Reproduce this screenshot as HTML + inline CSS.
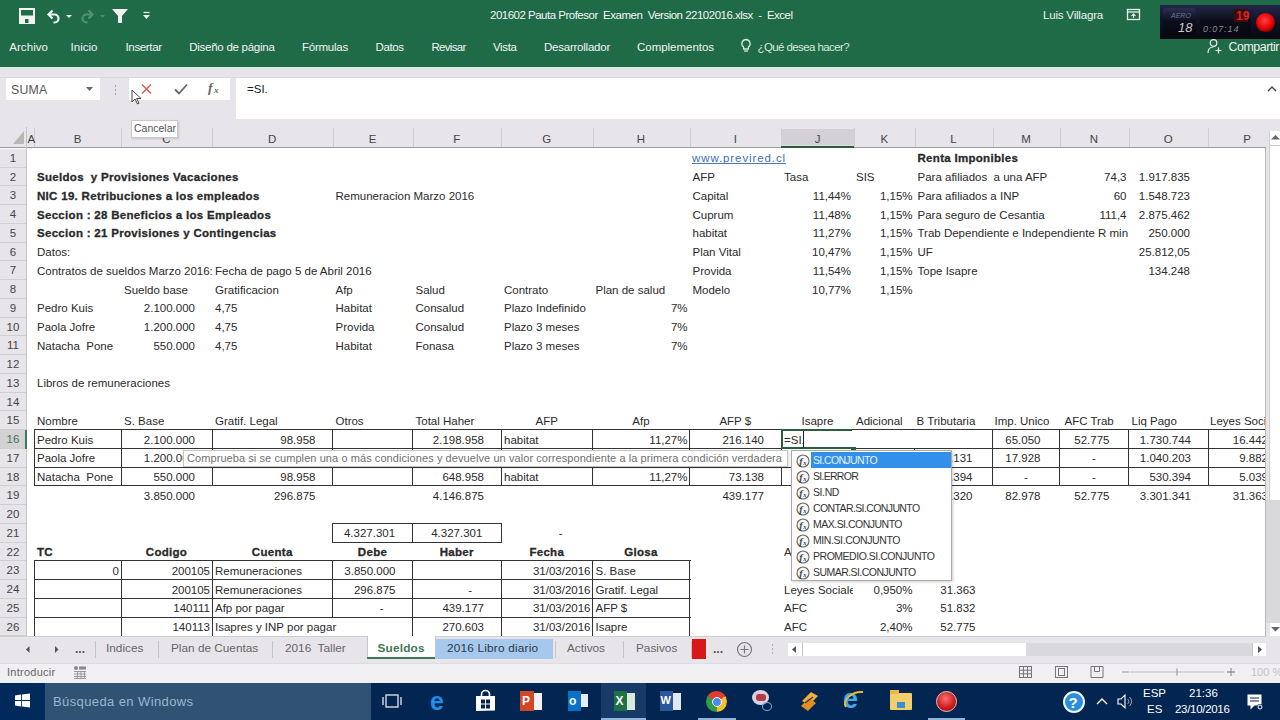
<!DOCTYPE html><html><head><meta charset="utf-8"><style>
*{margin:0;padding:0;box-sizing:border-box}
html,body{width:1280px;height:720px;overflow:hidden;background:#fff;font-family:"Liberation Sans",sans-serif}
.t,.c,.r,.a{position:absolute;white-space:pre}
.c{height:18.75px;line-height:18.75px}
.t{line-height:1}
svg{position:absolute;overflow:visible}
</style></head><body>
<div class="r" style="left:0px;top:0px;width:1280px;height:67px;background:#1f6b48;"></div>
<svg style="left:0;top:0" width="160" height="40" viewBox="0 0 160 40">
<path d="M20 9h14v14H20z" fill="none" stroke="#f2f2f2" stroke-width="2"/>
<path d="M20 16.5h14" stroke="#f2f2f2" stroke-width="2"/>
<path d="M21 17h12v5H21z" fill="#f2f2f2"/><path d="M25 19h3.5v4H25z" fill="#1f6b48"/>
<path d="M52.5 10.5l-4 4 4 4" fill="none" stroke="#f2f2f2" stroke-width="2.2"/>
<path d="M49 14.5h5.5a4 4 0 0 1 0 8h-1" fill="none" stroke="#f2f2f2" stroke-width="2.2"/>
<path d="M66 15h6l-3 3z" fill="#f2f2f2"/>
<path d="M88.5 10.5l4 4-4 4" fill="none" stroke="#4f9470" stroke-width="2.2"/>
<path d="M92 14.5h-5.5a4 4 0 0 0 0 8h1" fill="none" stroke="#4f9470" stroke-width="2.2"/>
<path d="M100 15h5l-2.5 2.5z" fill="#4f9470"/>
<path d="M112 9h16l-6 7v7h-4v-7z" fill="#f2f2f2"/>
<path d="M143.5 12.5h6" stroke="#f2f2f2" stroke-width="1.3"/>
<path d="M143 15h7l-3.5 4z" fill="#f2f2f2"/>
</svg>
<div class="t" style="left:490px;top:10px;font-size:11.5px;color:#f4f4f4;font-weight:normal;letter-spacing:-0.503px;">201602 Pauta Profesor  Examen  Version 22102016.xlsx  -  Excel</div>
<div class="t" style="left:1043px;top:10px;font-size:11.5px;color:#f0f0f0;font-weight:normal;letter-spacing:-0.187px;">Luis Villagra</div>
<svg style="left:1126px;top:8px" width="16" height="14" viewBox="0 0 16 14"><rect x="1.5" y="1.5" width="12" height="10" fill="none" stroke="#eee" stroke-width="1.3"/><path d="M1.5 4h12" stroke="#eee" stroke-width="1.3"/><path d="M7.5 10V6M5.5 8l2-2 2 2" stroke="#eee" stroke-width="1.1" fill="none"/></svg>
<div class="r" style="left:1160px;top:5px;width:120px;height:33.5px;background:linear-gradient(#23284a,#12142a 40%,#07080f);"></div>
<div class="r" style="left:1163px;top:8px;width:33px;height:27px;background:linear-gradient(#2a3050,#0c0e1c 50%,#06070c);border-radius:3px"></div>
<div class="r" style="left:1200px;top:8px;width:51px;height:27px;background:linear-gradient(#1e2440,#0a0b16 50%,#070810);border-radius:3px"></div>
<div class="r" style="left:1234px;top:9px;width:14px;height:13px;background:#3a0c10"></div>
<div class="t" style="left:1171px;top:12px;font-size:7px;color:#6a7090;font-style:italic">AERO</div>
<div class="t" style="left:1178px;top:21px;font-size:13px;color:#c8c8d0;font-style:italic">18</div>
<div class="t" style="left:1236px;top:9.5px;font-size:12px;color:#e02020;font-weight:bold">19</div>
<div class="t" style="left:1203px;top:25px;font-size:9px;color:#8a8a98;font-style:italic;letter-spacing:0.9px">0:07:14</div>
<div class="r" style="left:1256px;top:13px;width:19px;height:19px;background:radial-gradient(circle at 45% 40%,#ff4040,#e00000 55%,#400000 90%);border-radius:50%"></div>

<div class="t" style="left:9.25px;top:41.5px;font-size:11.5px;color:#f2f2f2;font-weight:normal;letter-spacing:0.058px;">Archivo</div>
<div class="t" style="left:70.5px;top:41.5px;font-size:11.5px;color:#f2f2f2;font-weight:normal;letter-spacing:0.026px;">Inicio</div>
<div class="t" style="left:125.5px;top:41.5px;font-size:11.5px;color:#f2f2f2;font-weight:normal;letter-spacing:-0.342px;">Insertar</div>
<div class="t" style="left:189.25px;top:41.5px;font-size:11.5px;color:#f2f2f2;font-weight:normal;letter-spacing:-0.266px;">Diseño de página</div>
<div class="t" style="left:302px;top:41.5px;font-size:11.5px;color:#f2f2f2;font-weight:normal;letter-spacing:-0.240px;">Fórmulas</div>
<div class="t" style="left:375.5px;top:41.5px;font-size:11.5px;color:#f2f2f2;font-weight:normal;letter-spacing:-0.408px;">Datos</div>
<div class="t" style="left:431.5px;top:41.5px;font-size:11.5px;color:#f2f2f2;font-weight:normal;letter-spacing:-0.711px;">Revisar</div>
<div class="t" style="left:493px;top:41.5px;font-size:11.5px;color:#f2f2f2;font-weight:normal;letter-spacing:-0.372px;">Vista</div>
<div class="t" style="left:544px;top:41.5px;font-size:11.5px;color:#f2f2f2;font-weight:normal;letter-spacing:-0.233px;">Desarrollador</div>
<div class="t" style="left:637px;top:41.5px;font-size:11.5px;color:#f2f2f2;font-weight:normal;letter-spacing:-0.028px;">Complementos</div>
<svg style="left:740px;top:38px" width="12" height="16" viewBox="0 0 12 16"><path d="M6 1.5a4.2 4.2 0 0 0-2.4 7.6V11h4.8V9.1A4.2 4.2 0 0 0 6 1.5z" fill="none" stroke="#d5e9de" stroke-width="1.3"/><path d="M4 13h4" stroke="#d5e9de" stroke-width="1.3"/></svg>
<div class="t" style="left:757.5px;top:41.5px;font-size:11.5px;color:#d5e9de;font-weight:normal;letter-spacing:-0.596px;">¿Qué desea hacer?</div>
<svg style="left:1207px;top:38px" width="16" height="16" viewBox="0 0 16 16"><circle cx="6.5" cy="5" r="3.3" fill="none" stroke="#eee" stroke-width="1.2"/><path d="M1 15c0-4 2.5-6 5.5-6" fill="none" stroke="#eee" stroke-width="1.2"/><path d="M11.5 9.5v6M8.5 12.5h6" stroke="#eee" stroke-width="1.2"/></svg>
<div class="t" style="left:1228.5px;top:40.5px;font-size:12.3px;color:#f2f2f2;font-weight:normal;letter-spacing:-0.388px;">Compartir</div>
<div class="r" style="left:0px;top:67px;width:1280px;height:81px;background:#e7e5e9;"></div>
<div class="r" style="left:0px;top:67px;width:1280px;height:3px;background:#d9ebe0;"></div>
<div class="r" style="left:0px;top:76.5px;width:1280px;height:1.5px;background:#dcd9de;"></div>
<div class="r" style="left:6px;top:78px;width:94px;height:22px;background:#ffffff;"></div>
<div class="t" style="left:11px;top:83.5px;font-size:12.3px;color:#555;font-weight:normal;letter-spacing:0.241px;">SUMA</div>
<svg style="left:86px;top:87px" width="8" height="5"><path d="M0 0h7l-3.5 4z" fill="#666"/></svg>
<div class="r" style="left:114.5px;top:85px;width:1.5px;height:1.5px;background:#aaa;"></div>
<div class="r" style="left:114.5px;top:89px;width:1.5px;height:1.5px;background:#aaa;"></div>
<div class="r" style="left:114.5px;top:93px;width:1.5px;height:1.5px;background:#aaa;"></div>
<div class="r" style="left:129px;top:78px;width:101px;height:22px;background:#ffffff;"></div>
<svg style="left:140px;top:83px" width="12" height="12" viewBox="0 0 12 12"><path d="M2 1.5l9 9M11 1.5l-9 9" stroke="#dd5a55" stroke-width="1.5"/></svg>
<svg style="left:174px;top:83px" width="14" height="12" viewBox="0 0 14 12"><path d="M1 6.5l4 4 8-9" fill="none" stroke="#666" stroke-width="1.8"/></svg>
<div class="t" style="left:208px;top:81px;font-size:13.5px;color:#666;font-family:'Liberation Serif',serif;font-style:italic;font-weight:bold">f</div><div class="t" style="left:214px;top:86px;font-size:9px;color:#666;font-family:'Liberation Serif',serif;font-style:italic;font-weight:bold">x</div>
<div class="r" style="left:236px;top:78px;width:1044px;height:41px;background:#ffffff;"></div>
<div class="t" style="left:247px;top:84px;font-size:11.5px;color:#222;font-weight:normal;">=SI.</div>
<svg style="left:1267px;top:86px" width="10" height="6"><path d="M1 5l4-4 4 4" fill="none" stroke="#444" stroke-width="1.4"/></svg>
<div class="r" style="left:0px;top:127px;width:1266px;height:21px;background:#e7e5e9;"></div>
<div class="r" style="left:0px;top:147px;width:1266px;height:1.2px;background:#9b9b9b;"></div>
<div class="r" style="left:26px;top:127px;width:1px;height:509.25px;background:#c6c6c6;"></div>
<svg style="left:12px;top:129px" width="14" height="16"><path d="M12 2v13H1z" fill="#b8b8b8"/></svg>
<div class="r" style="left:34px;top:128px;width:1px;height:19px;background:#cfcfcf;"></div>
<div class="t" style="left:27.5px;top:133.5px;font-size:11.5px;color:#444">A</div>
<div class="r" style="left:121px;top:128px;width:1px;height:19px;background:#cfcfcf;"></div>
<div class="t" style="left:47.5px;width:60px;text-align:center;top:133.5px;font-size:11.5px;color:#444">B</div>
<div class="r" style="left:212px;top:128px;width:1px;height:19px;background:#cfcfcf;"></div>
<div class="t" style="left:136.5px;width:60px;text-align:center;top:133.5px;font-size:11.5px;color:#444">C</div>
<div class="r" style="left:332.5px;top:128px;width:1px;height:19px;background:#cfcfcf;"></div>
<div class="t" style="left:242.25px;width:60px;text-align:center;top:133.5px;font-size:11.5px;color:#444">D</div>
<div class="r" style="left:412.5px;top:128px;width:1px;height:19px;background:#cfcfcf;"></div>
<div class="t" style="left:342.5px;width:60px;text-align:center;top:133.5px;font-size:11.5px;color:#444">E</div>
<div class="r" style="left:501px;top:128px;width:1px;height:19px;background:#cfcfcf;"></div>
<div class="t" style="left:426.75px;width:60px;text-align:center;top:133.5px;font-size:11.5px;color:#444">F</div>
<div class="r" style="left:592.5px;top:128px;width:1px;height:19px;background:#cfcfcf;"></div>
<div class="t" style="left:516.75px;width:60px;text-align:center;top:133.5px;font-size:11.5px;color:#444">G</div>
<div class="r" style="left:689.5px;top:128px;width:1px;height:19px;background:#cfcfcf;"></div>
<div class="t" style="left:611.0px;width:60px;text-align:center;top:133.5px;font-size:11.5px;color:#444">H</div>
<div class="r" style="left:781px;top:128px;width:1px;height:19px;background:#cfcfcf;"></div>
<div class="t" style="left:705.25px;width:60px;text-align:center;top:133.5px;font-size:11.5px;color:#444">I</div>
<div class="r" style="left:781px;top:128.5px;width:73px;height:19px;background:#d3d1d5;"></div>
<div class="r" style="left:781px;top:144.5px;width:73px;height:1.2px;background:#cfe3d6;"></div>
<div class="r" style="left:781px;top:145.7px;width:73px;height:2px;background:#2f5744;"></div>
<div class="r" style="left:854px;top:128px;width:1px;height:19px;background:#cfcfcf;"></div>
<div class="t" style="left:787.5px;width:60px;text-align:center;top:133.5px;font-size:11.5px;color:#444">J</div>
<div class="r" style="left:914.5px;top:128px;width:1px;height:19px;background:#cfcfcf;"></div>
<div class="t" style="left:854.25px;width:60px;text-align:center;top:133.5px;font-size:11.5px;color:#444">K</div>
<div class="r" style="left:992.5px;top:128px;width:1px;height:19px;background:#cfcfcf;"></div>
<div class="t" style="left:923.5px;width:60px;text-align:center;top:133.5px;font-size:11.5px;color:#444">L</div>
<div class="r" style="left:1059.5px;top:128px;width:1px;height:19px;background:#cfcfcf;"></div>
<div class="t" style="left:996.0px;width:60px;text-align:center;top:133.5px;font-size:11.5px;color:#444">M</div>
<div class="r" style="left:1128.5px;top:128px;width:1px;height:19px;background:#cfcfcf;"></div>
<div class="t" style="left:1064.0px;width:60px;text-align:center;top:133.5px;font-size:11.5px;color:#444">N</div>
<div class="r" style="left:1208px;top:128px;width:1px;height:19px;background:#cfcfcf;"></div>
<div class="t" style="left:1138.25px;width:60px;text-align:center;top:133.5px;font-size:11.5px;color:#444">O</div>
<div class="r" style="left:1266px;top:128px;width:1px;height:19px;background:#cfcfcf;"></div>
<div class="t" style="left:1217px;width:60px;text-align:center;top:133.5px;font-size:11.5px;color:#444">P</div>
<div class="r" style="left:0px;top:148.75px;width:26px;height:18.75px;background:#e7e5e9;"></div>
<div class="r" style="left:0px;top:166.5px;width:26px;height:1px;background:#d0d0d0;"></div>
<div class="t" style="left:0;width:26px;text-align:center;top:152.75px;font-size:11.5px;color:#444">1</div>
<div class="r" style="left:0px;top:167.5px;width:26px;height:18.75px;background:#e7e5e9;"></div>
<div class="r" style="left:0px;top:185.25px;width:26px;height:1px;background:#d0d0d0;"></div>
<div class="t" style="left:0;width:26px;text-align:center;top:171.50px;font-size:11.5px;color:#444">2</div>
<div class="r" style="left:0px;top:186.25px;width:26px;height:18.75px;background:#e7e5e9;"></div>
<div class="r" style="left:0px;top:204.0px;width:26px;height:1px;background:#d0d0d0;"></div>
<div class="t" style="left:0;width:26px;text-align:center;top:190.25px;font-size:11.5px;color:#444">3</div>
<div class="r" style="left:0px;top:205.0px;width:26px;height:18.75px;background:#e7e5e9;"></div>
<div class="r" style="left:0px;top:222.75px;width:26px;height:1px;background:#d0d0d0;"></div>
<div class="t" style="left:0;width:26px;text-align:center;top:209.00px;font-size:11.5px;color:#444">4</div>
<div class="r" style="left:0px;top:223.75px;width:26px;height:18.75px;background:#e7e5e9;"></div>
<div class="r" style="left:0px;top:241.5px;width:26px;height:1px;background:#d0d0d0;"></div>
<div class="t" style="left:0;width:26px;text-align:center;top:227.75px;font-size:11.5px;color:#444">5</div>
<div class="r" style="left:0px;top:242.5px;width:26px;height:18.75px;background:#e7e5e9;"></div>
<div class="r" style="left:0px;top:260.25px;width:26px;height:1px;background:#d0d0d0;"></div>
<div class="t" style="left:0;width:26px;text-align:center;top:246.50px;font-size:11.5px;color:#444">6</div>
<div class="r" style="left:0px;top:261.25px;width:26px;height:18.75px;background:#e7e5e9;"></div>
<div class="r" style="left:0px;top:279.0px;width:26px;height:1px;background:#d0d0d0;"></div>
<div class="t" style="left:0;width:26px;text-align:center;top:265.25px;font-size:11.5px;color:#444">7</div>
<div class="r" style="left:0px;top:280.0px;width:26px;height:18.75px;background:#e7e5e9;"></div>
<div class="r" style="left:0px;top:297.75px;width:26px;height:1px;background:#d0d0d0;"></div>
<div class="t" style="left:0;width:26px;text-align:center;top:284.00px;font-size:11.5px;color:#444">8</div>
<div class="r" style="left:0px;top:298.75px;width:26px;height:18.75px;background:#e7e5e9;"></div>
<div class="r" style="left:0px;top:316.5px;width:26px;height:1px;background:#d0d0d0;"></div>
<div class="t" style="left:0;width:26px;text-align:center;top:302.75px;font-size:11.5px;color:#444">9</div>
<div class="r" style="left:0px;top:317.5px;width:26px;height:18.75px;background:#e7e5e9;"></div>
<div class="r" style="left:0px;top:335.25px;width:26px;height:1px;background:#d0d0d0;"></div>
<div class="t" style="left:0;width:26px;text-align:center;top:321.50px;font-size:11.5px;color:#444">10</div>
<div class="r" style="left:0px;top:336.25px;width:26px;height:18.75px;background:#e7e5e9;"></div>
<div class="r" style="left:0px;top:354.0px;width:26px;height:1px;background:#d0d0d0;"></div>
<div class="t" style="left:0;width:26px;text-align:center;top:340.25px;font-size:11.5px;color:#444">11</div>
<div class="r" style="left:0px;top:355.0px;width:26px;height:18.75px;background:#e7e5e9;"></div>
<div class="r" style="left:0px;top:372.75px;width:26px;height:1px;background:#d0d0d0;"></div>
<div class="t" style="left:0;width:26px;text-align:center;top:359.00px;font-size:11.5px;color:#444">12</div>
<div class="r" style="left:0px;top:373.75px;width:26px;height:18.75px;background:#e7e5e9;"></div>
<div class="r" style="left:0px;top:391.5px;width:26px;height:1px;background:#d0d0d0;"></div>
<div class="t" style="left:0;width:26px;text-align:center;top:377.75px;font-size:11.5px;color:#444">13</div>
<div class="r" style="left:0px;top:392.5px;width:26px;height:18.75px;background:#e7e5e9;"></div>
<div class="r" style="left:0px;top:410.25px;width:26px;height:1px;background:#d0d0d0;"></div>
<div class="t" style="left:0;width:26px;text-align:center;top:396.50px;font-size:11.5px;color:#444">14</div>
<div class="r" style="left:0px;top:411.25px;width:26px;height:18.75px;background:#e7e5e9;"></div>
<div class="r" style="left:0px;top:429.0px;width:26px;height:1px;background:#d0d0d0;"></div>
<div class="t" style="left:0;width:26px;text-align:center;top:415.25px;font-size:11.5px;color:#444">15</div>
<div class="r" style="left:0px;top:430.0px;width:26px;height:18.75px;background:#d2d2d2;"></div>
<div class="r" style="left:0px;top:447.75px;width:26px;height:1px;background:#d0d0d0;"></div>
<div class="t" style="left:0;width:26px;text-align:center;top:434.00px;font-size:11.5px;color:#4a6e5a">16</div>
<div class="r" style="left:0px;top:448.75px;width:26px;height:18.75px;background:#e7e5e9;"></div>
<div class="r" style="left:0px;top:466.5px;width:26px;height:1px;background:#d0d0d0;"></div>
<div class="t" style="left:0;width:26px;text-align:center;top:452.75px;font-size:11.5px;color:#444">17</div>
<div class="r" style="left:0px;top:467.5px;width:26px;height:18.75px;background:#e7e5e9;"></div>
<div class="r" style="left:0px;top:485.25px;width:26px;height:1px;background:#d0d0d0;"></div>
<div class="t" style="left:0;width:26px;text-align:center;top:471.50px;font-size:11.5px;color:#444">18</div>
<div class="r" style="left:0px;top:486.25px;width:26px;height:18.75px;background:#e7e5e9;"></div>
<div class="r" style="left:0px;top:504.0px;width:26px;height:1px;background:#d0d0d0;"></div>
<div class="t" style="left:0;width:26px;text-align:center;top:490.25px;font-size:11.5px;color:#444">19</div>
<div class="r" style="left:0px;top:505.0px;width:26px;height:18.75px;background:#e7e5e9;"></div>
<div class="r" style="left:0px;top:522.75px;width:26px;height:1px;background:#d0d0d0;"></div>
<div class="t" style="left:0;width:26px;text-align:center;top:509.00px;font-size:11.5px;color:#444">20</div>
<div class="r" style="left:0px;top:523.75px;width:26px;height:18.75px;background:#e7e5e9;"></div>
<div class="r" style="left:0px;top:541.5px;width:26px;height:1px;background:#d0d0d0;"></div>
<div class="t" style="left:0;width:26px;text-align:center;top:527.75px;font-size:11.5px;color:#444">21</div>
<div class="r" style="left:0px;top:542.5px;width:26px;height:18.75px;background:#e7e5e9;"></div>
<div class="r" style="left:0px;top:560.25px;width:26px;height:1px;background:#d0d0d0;"></div>
<div class="t" style="left:0;width:26px;text-align:center;top:546.50px;font-size:11.5px;color:#444">22</div>
<div class="r" style="left:0px;top:561.25px;width:26px;height:18.75px;background:#e7e5e9;"></div>
<div class="r" style="left:0px;top:579.0px;width:26px;height:1px;background:#d0d0d0;"></div>
<div class="t" style="left:0;width:26px;text-align:center;top:565.25px;font-size:11.5px;color:#444">23</div>
<div class="r" style="left:0px;top:580.0px;width:26px;height:18.75px;background:#e7e5e9;"></div>
<div class="r" style="left:0px;top:597.75px;width:26px;height:1px;background:#d0d0d0;"></div>
<div class="t" style="left:0;width:26px;text-align:center;top:584.00px;font-size:11.5px;color:#444">24</div>
<div class="r" style="left:0px;top:598.75px;width:26px;height:18.75px;background:#e7e5e9;"></div>
<div class="r" style="left:0px;top:616.5px;width:26px;height:1px;background:#d0d0d0;"></div>
<div class="t" style="left:0;width:26px;text-align:center;top:602.75px;font-size:11.5px;color:#444">25</div>
<div class="r" style="left:0px;top:617.5px;width:26px;height:18.75px;background:#e7e5e9;"></div>
<div class="r" style="left:0px;top:635.25px;width:26px;height:1px;background:#d0d0d0;"></div>
<div class="t" style="left:0;width:26px;text-align:center;top:621.50px;font-size:11.5px;color:#444">26</div>
<div class="r" style="left:25px;top:430.0px;width:1.6px;height:18.75px;background:#3f7a5c;"></div>
<div class="c" style="left:692px;top:149.25px;font-size:11.5px;color:#3f6fb8;letter-spacing:0.899px">www.previred.cl</div>
<div class="r" style="left:692px;top:163.25px;width:94px;height:1px;background:#4a78bd"></div>
<div class="c" style="left:917.50px;top:149.25px;font-size:11.5px;font-weight:bold;color:#2a2a2a;letter-spacing:0.3px;-webkit-text-stroke:0.3px #2a2a2a;">Renta Imponibles</div>
<div class="c" style="left:37.00px;top:168.00px;font-size:11.5px;font-weight:bold;color:#2a2a2a;letter-spacing:0.3px;-webkit-text-stroke:0.3px #2a2a2a;">Sueldos  y Provisiones Vacaciones</div>
<div class="c" style="left:37.00px;top:186.75px;font-size:11.5px;font-weight:bold;color:#2a2a2a;letter-spacing:0.3px;-webkit-text-stroke:0.3px #2a2a2a;">NIC 19. Retribuciones a los empleados</div>
<div class="c" style="left:37.00px;top:205.50px;font-size:11.5px;font-weight:bold;color:#2a2a2a;letter-spacing:0.3px;-webkit-text-stroke:0.3px #2a2a2a;">Seccion : 28 Beneficios a los Empleados</div>
<div class="c" style="left:37.00px;top:224.25px;font-size:11.5px;font-weight:bold;color:#2a2a2a;letter-spacing:0.3px;-webkit-text-stroke:0.3px #2a2a2a;">Seccion : 21 Provisiones y Contingencias</div>
<div class="c" style="left:37.00px;top:243.00px;font-size:11.5px;font-weight:normal;color:#2a2a2a;">Datos:</div>
<div class="c" style="left:37.00px;top:261.75px;font-size:11.5px;font-weight:normal;color:#2a2a2a;">Contratos de sueldos Marzo 2016:</div>
<div class="c" style="left:215.00px;top:261.75px;font-size:11.5px;font-weight:normal;color:#2a2a2a;">Fecha de pago 5 de Abril 2016</div>
<div class="c" style="left:335.50px;top:186.75px;font-size:11.5px;font-weight:normal;color:#2a2a2a;">Remuneracion Marzo 2016</div>
<div class="c" style="left:692.50px;top:168.00px;font-size:11.5px;font-weight:normal;color:#2a2a2a;">AFP</div>
<div class="c" style="left:784.00px;top:168.00px;font-size:11.5px;font-weight:normal;color:#2a2a2a;">Tasa</div>
<div class="c" style="left:856.00px;top:168.00px;font-size:11.5px;font-weight:normal;color:#2a2a2a;">SIS</div>
<div class="c" style="left:692.50px;top:186.75px;font-size:11.5px;font-weight:normal;color:#2a2a2a;">Capital</div>
<div class="c" style="right:429.00px;top:186.75px;font-size:11.5px;font-weight:normal;color:#2a2a2a;;text-align:right">11,44%</div>
<div class="c" style="right:367.50px;top:186.75px;font-size:11.5px;font-weight:normal;color:#2a2a2a;;text-align:right">1,15%</div>
<div class="c" style="left:692.50px;top:205.50px;font-size:11.5px;font-weight:normal;color:#2a2a2a;">Cuprum</div>
<div class="c" style="right:429.00px;top:205.50px;font-size:11.5px;font-weight:normal;color:#2a2a2a;;text-align:right">11,48%</div>
<div class="c" style="right:367.50px;top:205.50px;font-size:11.5px;font-weight:normal;color:#2a2a2a;;text-align:right">1,15%</div>
<div class="c" style="left:692.50px;top:224.25px;font-size:11.5px;font-weight:normal;color:#2a2a2a;">habitat</div>
<div class="c" style="right:429.00px;top:224.25px;font-size:11.5px;font-weight:normal;color:#2a2a2a;;text-align:right">11,27%</div>
<div class="c" style="right:367.50px;top:224.25px;font-size:11.5px;font-weight:normal;color:#2a2a2a;;text-align:right">1,15%</div>
<div class="c" style="left:692.50px;top:243.00px;font-size:11.5px;font-weight:normal;color:#2a2a2a;">Plan Vital</div>
<div class="c" style="right:429.00px;top:243.00px;font-size:11.5px;font-weight:normal;color:#2a2a2a;;text-align:right">10,47%</div>
<div class="c" style="right:367.50px;top:243.00px;font-size:11.5px;font-weight:normal;color:#2a2a2a;;text-align:right">1,15%</div>
<div class="c" style="left:692.50px;top:261.75px;font-size:11.5px;font-weight:normal;color:#2a2a2a;">Provida</div>
<div class="c" style="right:429.00px;top:261.75px;font-size:11.5px;font-weight:normal;color:#2a2a2a;;text-align:right">11,54%</div>
<div class="c" style="right:367.50px;top:261.75px;font-size:11.5px;font-weight:normal;color:#2a2a2a;;text-align:right">1,15%</div>
<div class="c" style="left:692.50px;top:280.50px;font-size:11.5px;font-weight:normal;color:#2a2a2a;">Modelo</div>
<div class="c" style="right:429.00px;top:280.50px;font-size:11.5px;font-weight:normal;color:#2a2a2a;;text-align:right">10,77%</div>
<div class="c" style="right:367.50px;top:280.50px;font-size:11.5px;font-weight:normal;color:#2a2a2a;;text-align:right">1,15%</div>
<div class="c" style="left:917.50px;top:168.00px;font-size:11.5px;font-weight:normal;color:#2a2a2a;">Para afiliados  a una AFP</div>
<div class="c" style="right:153.50px;top:168.00px;font-size:11.5px;font-weight:normal;color:#2a2a2a;;text-align:right">74,3</div>
<div class="c" style="right:90.00px;top:168.00px;font-size:11.5px;font-weight:normal;color:#2a2a2a;;text-align:right">1.917.835</div>
<div class="c" style="left:917.50px;top:186.75px;font-size:11.5px;font-weight:normal;color:#2a2a2a;">Para afiliados a INP</div>
<div class="c" style="right:153.50px;top:186.75px;font-size:11.5px;font-weight:normal;color:#2a2a2a;;text-align:right">60</div>
<div class="c" style="right:90.00px;top:186.75px;font-size:11.5px;font-weight:normal;color:#2a2a2a;;text-align:right">1.548.723</div>
<div class="c" style="left:917.50px;top:205.50px;font-size:11.5px;font-weight:normal;color:#2a2a2a;">Para seguro de Cesantia</div>
<div class="c" style="right:153.50px;top:205.50px;font-size:11.5px;font-weight:normal;color:#2a2a2a;;text-align:right">111,4</div>
<div class="c" style="right:90.00px;top:205.50px;font-size:11.5px;font-weight:normal;color:#2a2a2a;;text-align:right">2.875.462</div>
<div class="c" style="left:917.50px;top:224.25px;font-size:11.5px;font-weight:normal;color:#2a2a2a;">Trab Dependiente e Independiente R min</div>
<div class="c" style="right:90.00px;top:224.25px;font-size:11.5px;font-weight:normal;color:#2a2a2a;;text-align:right">250.000</div>
<div class="c" style="left:917.50px;top:243.00px;font-size:11.5px;font-weight:normal;color:#2a2a2a;">UF</div>
<div class="c" style="right:90.00px;top:243.00px;font-size:11.5px;font-weight:normal;color:#2a2a2a;;text-align:right">25.812,05</div>
<div class="c" style="left:917.50px;top:261.75px;font-size:11.5px;font-weight:normal;color:#2a2a2a;">Tope Isapre</div>
<div class="c" style="right:90.00px;top:261.75px;font-size:11.5px;font-weight:normal;color:#2a2a2a;;text-align:right">134.248</div>
<div class="c" style="left:124.00px;top:280.50px;font-size:11.5px;font-weight:normal;color:#2a2a2a;">Sueldo base</div>
<div class="c" style="left:215.00px;top:280.50px;font-size:11.5px;font-weight:normal;color:#2a2a2a;">Gratificacion</div>
<div class="c" style="left:335.50px;top:280.50px;font-size:11.5px;font-weight:normal;color:#2a2a2a;">Afp</div>
<div class="c" style="left:415.50px;top:280.50px;font-size:11.5px;font-weight:normal;color:#2a2a2a;">Salud</div>
<div class="c" style="left:504.00px;top:280.50px;font-size:11.5px;font-weight:normal;color:#2a2a2a;">Contrato</div>
<div class="c" style="left:595.50px;top:280.50px;font-size:11.5px;font-weight:normal;color:#2a2a2a;">Plan de salud</div>
<div class="c" style="left:37.00px;top:299.25px;font-size:11.5px;font-weight:normal;color:#2a2a2a;">Pedro Kuis</div>
<div class="c" style="right:1085.00px;top:299.25px;font-size:11.5px;font-weight:normal;color:#2a2a2a;;text-align:right">2.100.000</div>
<div class="c" style="left:215.00px;top:299.25px;font-size:11.5px;font-weight:normal;color:#2a2a2a;">4,75</div>
<div class="c" style="left:335.50px;top:299.25px;font-size:11.5px;font-weight:normal;color:#2a2a2a;">Habitat</div>
<div class="c" style="left:415.50px;top:299.25px;font-size:11.5px;font-weight:normal;color:#2a2a2a;">Consalud</div>
<div class="c" style="left:504.00px;top:299.25px;font-size:11.5px;font-weight:normal;color:#2a2a2a;">Plazo Indefinido</div>
<div class="c" style="right:592.50px;top:299.25px;font-size:11.5px;font-weight:normal;color:#2a2a2a;;text-align:right">7%</div>
<div class="c" style="left:37.00px;top:318.00px;font-size:11.5px;font-weight:normal;color:#2a2a2a;">Paola Jofre</div>
<div class="c" style="right:1085.00px;top:318.00px;font-size:11.5px;font-weight:normal;color:#2a2a2a;;text-align:right">1.200.000</div>
<div class="c" style="left:215.00px;top:318.00px;font-size:11.5px;font-weight:normal;color:#2a2a2a;">4,75</div>
<div class="c" style="left:335.50px;top:318.00px;font-size:11.5px;font-weight:normal;color:#2a2a2a;">Provida</div>
<div class="c" style="left:415.50px;top:318.00px;font-size:11.5px;font-weight:normal;color:#2a2a2a;">Consalud</div>
<div class="c" style="left:504.00px;top:318.00px;font-size:11.5px;font-weight:normal;color:#2a2a2a;">Plazo 3 meses</div>
<div class="c" style="right:592.50px;top:318.00px;font-size:11.5px;font-weight:normal;color:#2a2a2a;;text-align:right">7%</div>
<div class="c" style="left:37.00px;top:336.75px;font-size:11.5px;font-weight:normal;color:#2a2a2a;">Natacha  Pone</div>
<div class="c" style="right:1085.00px;top:336.75px;font-size:11.5px;font-weight:normal;color:#2a2a2a;;text-align:right">550.000</div>
<div class="c" style="left:215.00px;top:336.75px;font-size:11.5px;font-weight:normal;color:#2a2a2a;">4,75</div>
<div class="c" style="left:335.50px;top:336.75px;font-size:11.5px;font-weight:normal;color:#2a2a2a;">Habitat</div>
<div class="c" style="left:415.50px;top:336.75px;font-size:11.5px;font-weight:normal;color:#2a2a2a;">Fonasa</div>
<div class="c" style="left:504.00px;top:336.75px;font-size:11.5px;font-weight:normal;color:#2a2a2a;">Plazo 3 meses</div>
<div class="c" style="right:592.50px;top:336.75px;font-size:11.5px;font-weight:normal;color:#2a2a2a;;text-align:right">7%</div>
<div class="c" style="left:37.00px;top:374.25px;font-size:11.5px;font-weight:normal;color:#2a2a2a;">Libros de remuneraciones</div>
<div class="c" style="left:37.00px;top:411.75px;font-size:11.5px;font-weight:normal;color:#2a2a2a;">Nombre</div>
<div class="c" style="left:124.00px;top:411.75px;font-size:11.5px;font-weight:normal;color:#2a2a2a;">S. Base</div>
<div class="c" style="left:215.00px;top:411.75px;font-size:11.5px;font-weight:normal;color:#2a2a2a;">Gratif. Legal</div>
<div class="c" style="left:335.50px;top:411.75px;font-size:11.5px;font-weight:normal;color:#2a2a2a;">Otros</div>
<div class="c" style="left:415.50px;top:411.75px;font-size:11.5px;font-weight:normal;color:#2a2a2a;">Total Haher</div>
<div class="c" style="left:446.75px;width:200px;top:411.75px;font-size:11.5px;font-weight:normal;color:#2a2a2a;;text-align:center">AFP</div>
<div class="c" style="left:541.00px;width:200px;top:411.75px;font-size:11.5px;font-weight:normal;color:#2a2a2a;;text-align:center">Afp</div>
<div class="c" style="left:635.25px;width:200px;top:411.75px;font-size:11.5px;font-weight:normal;color:#2a2a2a;;text-align:center">AFP $</div>
<div class="c" style="left:717.50px;width:200px;top:411.75px;font-size:11.5px;font-weight:normal;color:#2a2a2a;;text-align:center">Isapre</div>
<div class="c" style="left:856.00px;top:411.75px;font-size:11.5px;font-weight:normal;color:#2a2a2a;">Adicional</div>
<div class="c" style="left:916.50px;top:411.75px;font-size:11.5px;font-weight:normal;color:#2a2a2a;">B Tributaria</div>
<div class="c" style="left:994.50px;top:411.75px;font-size:11.5px;font-weight:normal;color:#2a2a2a;">Imp. Unico</div>
<div class="c" style="left:1064.50px;top:411.75px;font-size:11.5px;font-weight:normal;color:#2a2a2a;">AFC Trab</div>
<div class="c" style="left:1131.50px;top:411.75px;font-size:11.5px;font-weight:normal;color:#2a2a2a;">Liq Pago</div>
<div class="c" style="left:1210.00px;top:411.75px;font-size:11.5px;font-weight:normal;color:#2a2a2a;">Leyes Sociales</div>
<div class="r" style="left:33.5px;top:429px;width:1233px;height:1.4px;background:#333;"></div>
<div class="r" style="left:33.5px;top:448px;width:1233px;height:1.4px;background:#333;"></div>
<div class="r" style="left:33.5px;top:467px;width:1233px;height:1.4px;background:#333;"></div>
<div class="r" style="left:33.5px;top:485px;width:1233px;height:1.4px;background:#333;"></div>
<div class="r" style="left:34px;top:429px;width:1.4px;height:57px;background:#333;"></div>
<div class="r" style="left:121px;top:429px;width:1.4px;height:57px;background:#333;"></div>
<div class="r" style="left:212px;top:429px;width:1.4px;height:57px;background:#333;"></div>
<div class="r" style="left:332px;top:429px;width:1.4px;height:57px;background:#333;"></div>
<div class="r" style="left:412px;top:429px;width:1.4px;height:57px;background:#333;"></div>
<div class="r" style="left:501px;top:429px;width:1.4px;height:57px;background:#333;"></div>
<div class="r" style="left:592px;top:429px;width:1.4px;height:57px;background:#333;"></div>
<div class="r" style="left:689px;top:429px;width:1.4px;height:57px;background:#333;"></div>
<div class="r" style="left:781px;top:429px;width:1.4px;height:57px;background:#333;"></div>
<div class="r" style="left:854px;top:448px;width:1.4px;height:38px;background:#333;"></div>
<div class="r" style="left:914px;top:448px;width:1.4px;height:38px;background:#333;"></div>
<div class="r" style="left:992px;top:429px;width:1.4px;height:57px;background:#333;"></div>
<div class="r" style="left:1059px;top:429px;width:1.4px;height:57px;background:#333;"></div>
<div class="r" style="left:1128px;top:429px;width:1.4px;height:57px;background:#333;"></div>
<div class="r" style="left:1208px;top:429px;width:1.4px;height:57px;background:#333;"></div>
<div class="c" style="left:37.00px;top:430.50px;font-size:11.5px;font-weight:normal;color:#2a2a2a;">Pedro Kuis</div>
<div class="c" style="right:1085.00px;top:430.50px;font-size:11.5px;font-weight:normal;color:#2a2a2a;;text-align:right">2.100.000</div>
<div class="c" style="right:964.50px;top:430.50px;font-size:11.5px;font-weight:normal;color:#2a2a2a;;text-align:right">98.958</div>
<div class="c" style="right:796.00px;top:430.50px;font-size:11.5px;font-weight:normal;color:#2a2a2a;;text-align:right">2.198.958</div>
<div class="c" style="left:504.00px;top:430.50px;font-size:11.5px;font-weight:normal;color:#2a2a2a;">habitat</div>
<div class="c" style="right:592.50px;top:430.50px;font-size:11.5px;font-weight:normal;color:#2a2a2a;;text-align:right">11,27%</div>
<div class="c" style="right:516.00px;top:430.50px;font-size:11.5px;font-weight:normal;color:#2a2a2a;;text-align:right">216.140</div>
<div class="c" style="right:239.50px;top:430.50px;font-size:11.5px;font-weight:normal;color:#2a2a2a;;text-align:right">65.050</div>
<div class="c" style="right:170.50px;top:430.50px;font-size:11.5px;font-weight:normal;color:#2a2a2a;;text-align:right">52.775</div>
<div class="c" style="right:89.00px;top:430.50px;font-size:11.5px;font-weight:normal;color:#2a2a2a;;text-align:right">1.730.744</div>
<div class="c" style="right:12.00px;top:430.50px;font-size:11.5px;font-weight:normal;color:#2a2a2a;;text-align:right">16.442</div>
<div class="c" style="left:37.00px;top:449.25px;font-size:11.5px;font-weight:normal;color:#2a2a2a;">Paola Jofre</div>
<div class="c" style="right:1085.00px;top:449.25px;font-size:11.5px;font-weight:normal;color:#2a2a2a;;text-align:right">1.200.000</div>
<div class="c" style="right:307.50px;top:449.25px;font-size:11.5px;font-weight:normal;color:#2a2a2a;;text-align:right">.131</div>
<div class="c" style="right:239.50px;top:449.25px;font-size:11.5px;font-weight:normal;color:#2a2a2a;;text-align:right">17.928</div>
<div class="c" style="left:994.00px;width:200px;top:449.25px;font-size:11.5px;font-weight:normal;color:#2a2a2a;;text-align:center">-</div>
<div class="c" style="right:89.00px;top:449.25px;font-size:11.5px;font-weight:normal;color:#2a2a2a;;text-align:right">1.040.203</div>
<div class="c" style="right:12.00px;top:449.25px;font-size:11.5px;font-weight:normal;color:#2a2a2a;;text-align:right">9.882</div>
<div class="c" style="left:37.00px;top:468.00px;font-size:11.5px;font-weight:normal;color:#2a2a2a;">Natacha  Pone</div>
<div class="c" style="right:1085.00px;top:468.00px;font-size:11.5px;font-weight:normal;color:#2a2a2a;;text-align:right">550.000</div>
<div class="c" style="right:964.50px;top:468.00px;font-size:11.5px;font-weight:normal;color:#2a2a2a;;text-align:right">98.958</div>
<div class="c" style="right:796.00px;top:468.00px;font-size:11.5px;font-weight:normal;color:#2a2a2a;;text-align:right">648.958</div>
<div class="c" style="left:504.00px;top:468.00px;font-size:11.5px;font-weight:normal;color:#2a2a2a;">habitat</div>
<div class="c" style="right:592.50px;top:468.00px;font-size:11.5px;font-weight:normal;color:#2a2a2a;;text-align:right">11,27%</div>
<div class="c" style="right:516.00px;top:468.00px;font-size:11.5px;font-weight:normal;color:#2a2a2a;;text-align:right">73.138</div>
<div class="c" style="right:307.50px;top:468.00px;font-size:11.5px;font-weight:normal;color:#2a2a2a;;text-align:right">.394</div>
<div class="c" style="left:926.00px;width:200px;top:468.00px;font-size:11.5px;font-weight:normal;color:#2a2a2a;;text-align:center">-</div>
<div class="c" style="left:994.00px;width:200px;top:468.00px;font-size:11.5px;font-weight:normal;color:#2a2a2a;;text-align:center">-</div>
<div class="c" style="right:89.00px;top:468.00px;font-size:11.5px;font-weight:normal;color:#2a2a2a;;text-align:right">530.394</div>
<div class="c" style="right:12.00px;top:468.00px;font-size:11.5px;font-weight:normal;color:#2a2a2a;;text-align:right">5.039</div>
<div class="c" style="right:1085.00px;top:486.75px;font-size:11.5px;font-weight:normal;color:#2a2a2a;;text-align:right">3.850.000</div>
<div class="c" style="right:964.50px;top:486.75px;font-size:11.5px;font-weight:normal;color:#2a2a2a;;text-align:right">296.875</div>
<div class="c" style="right:796.00px;top:486.75px;font-size:11.5px;font-weight:normal;color:#2a2a2a;;text-align:right">4.146.875</div>
<div class="c" style="right:516.00px;top:486.75px;font-size:11.5px;font-weight:normal;color:#2a2a2a;;text-align:right">439.177</div>
<div class="c" style="right:307.50px;top:486.75px;font-size:11.5px;font-weight:normal;color:#2a2a2a;;text-align:right">.320</div>
<div class="c" style="right:239.50px;top:486.75px;font-size:11.5px;font-weight:normal;color:#2a2a2a;;text-align:right">82.978</div>
<div class="c" style="right:170.50px;top:486.75px;font-size:11.5px;font-weight:normal;color:#2a2a2a;;text-align:right">52.775</div>
<div class="c" style="right:89.00px;top:486.75px;font-size:11.5px;font-weight:normal;color:#2a2a2a;;text-align:right">3.301.341</div>
<div class="c" style="right:12.00px;top:486.75px;font-size:11.5px;font-weight:normal;color:#2a2a2a;;text-align:right">31.363</div>
<div class="r" style="left:331.5px;top:523px;width:81px;height:1.4px;background:#333;"></div>
<div class="r" style="left:331.5px;top:542px;width:81px;height:1.4px;background:#333;"></div>
<div class="r" style="left:411.5px;top:523px;width:90px;height:1.4px;background:#333;"></div>
<div class="r" style="left:411.5px;top:542px;width:90px;height:1.4px;background:#333;"></div>
<div class="r" style="left:332px;top:523px;width:1.4px;height:20px;background:#333;"></div>
<div class="r" style="left:412px;top:523px;width:1.4px;height:20px;background:#333;"></div>
<div class="r" style="left:501px;top:523px;width:1.4px;height:20px;background:#333;"></div>
<div class="c" style="left:269.50px;width:200px;top:524.25px;font-size:11.5px;font-weight:normal;color:#2a2a2a;;text-align:center">4.327.301</div>
<div class="c" style="left:356.75px;width:200px;top:524.25px;font-size:11.5px;font-weight:normal;color:#2a2a2a;;text-align:center">4.327.301</div>
<div class="c" style="left:460.75px;width:200px;top:524.25px;font-size:11.5px;font-weight:normal;color:#2a2a2a;;text-align:center">-</div>
<div class="c" style="left:37.00px;top:543.00px;font-size:11.5px;font-weight:bold;color:#2a2a2a;letter-spacing:0.3px;-webkit-text-stroke:0.3px #2a2a2a;">TC</div>
<div class="c" style="left:66.50px;width:200px;top:543.00px;font-size:11.5px;font-weight:bold;color:#2a2a2a;letter-spacing:0.3px;-webkit-text-stroke:0.3px #2a2a2a;;text-align:center">Codigo</div>
<div class="c" style="left:172.25px;width:200px;top:543.00px;font-size:11.5px;font-weight:bold;color:#2a2a2a;letter-spacing:0.3px;-webkit-text-stroke:0.3px #2a2a2a;;text-align:center">Cuenta</div>
<div class="c" style="left:272.50px;width:200px;top:543.00px;font-size:11.5px;font-weight:bold;color:#2a2a2a;letter-spacing:0.3px;-webkit-text-stroke:0.3px #2a2a2a;;text-align:center">Debe</div>
<div class="c" style="left:356.75px;width:200px;top:543.00px;font-size:11.5px;font-weight:bold;color:#2a2a2a;letter-spacing:0.3px;-webkit-text-stroke:0.3px #2a2a2a;;text-align:center">Haber</div>
<div class="c" style="left:446.75px;width:200px;top:543.00px;font-size:11.5px;font-weight:bold;color:#2a2a2a;letter-spacing:0.3px;-webkit-text-stroke:0.3px #2a2a2a;;text-align:center">Fecha</div>
<div class="c" style="left:541.00px;width:200px;top:543.00px;font-size:11.5px;font-weight:bold;color:#2a2a2a;letter-spacing:0.3px;-webkit-text-stroke:0.3px #2a2a2a;;text-align:center">Glosa</div>
<div class="c" style="left:784.00px;top:543.00px;font-size:11.5px;font-weight:normal;color:#2a2a2a;">A</div>
<div class="r" style="left:33.5px;top:560px;width:657px;height:1.4px;background:#333;"></div>
<div class="r" style="left:33.5px;top:579px;width:657px;height:1.4px;background:#333;"></div>
<div class="r" style="left:33.5px;top:598px;width:657px;height:1.4px;background:#333;"></div>
<div class="r" style="left:33.5px;top:617px;width:657px;height:1.4px;background:#333;"></div>
<div class="r" style="left:34px;top:560px;width:1.4px;height:76px;background:#333;"></div>
<div class="r" style="left:121px;top:560px;width:1.4px;height:76px;background:#333;"></div>
<div class="r" style="left:212px;top:560px;width:1.4px;height:76px;background:#333;"></div>
<div class="r" style="left:332px;top:560px;width:1.4px;height:58px;background:#333;"></div>
<div class="r" style="left:412px;top:560px;width:1.4px;height:76px;background:#333;"></div>
<div class="r" style="left:501px;top:560px;width:1.4px;height:76px;background:#333;"></div>
<div class="r" style="left:592px;top:560px;width:1.4px;height:76px;background:#333;"></div>
<div class="r" style="left:689px;top:560px;width:1.4px;height:76px;background:#333;"></div>
<div class="c" style="right:1161.00px;top:561.75px;font-size:11.5px;font-weight:normal;color:#2a2a2a;;text-align:right">0</div>
<div class="c" style="right:1070.00px;top:561.75px;font-size:11.5px;font-weight:normal;color:#2a2a2a;;text-align:right">200105</div>
<div class="c" style="left:215.00px;top:561.75px;font-size:11.5px;font-weight:normal;color:#2a2a2a;">Remuneraciones</div>
<div class="c" style="right:884.50px;top:561.75px;font-size:11.5px;font-weight:normal;color:#2a2a2a;;text-align:right">3.850.000</div>
<div class="c" style="right:689.50px;top:561.75px;font-size:11.5px;font-weight:normal;color:#2a2a2a;;text-align:right">31/03/2016</div>
<div class="c" style="left:595.50px;top:561.75px;font-size:11.5px;font-weight:normal;color:#2a2a2a;">S. Base</div>
<div class="c" style="right:1070.00px;top:580.50px;font-size:11.5px;font-weight:normal;color:#2a2a2a;;text-align:right">200105</div>
<div class="c" style="left:215.00px;top:580.50px;font-size:11.5px;font-weight:normal;color:#2a2a2a;">Remuneraciones</div>
<div class="c" style="right:884.50px;top:580.50px;font-size:11.5px;font-weight:normal;color:#2a2a2a;;text-align:right">296.875</div>
<div class="c" style="right:808.00px;top:580.50px;font-size:11.5px;font-weight:normal;color:#2a2a2a;;text-align:right">-</div>
<div class="c" style="right:689.50px;top:580.50px;font-size:11.5px;font-weight:normal;color:#2a2a2a;;text-align:right">31/03/2016</div>
<div class="c" style="left:595.50px;top:580.50px;font-size:11.5px;font-weight:normal;color:#2a2a2a;">Gratif. Legal</div>
<div class="c" style="right:1070.00px;top:599.25px;font-size:11.5px;font-weight:normal;color:#2a2a2a;;text-align:right">140111</div>
<div class="c" style="left:215.00px;top:599.25px;font-size:11.5px;font-weight:normal;color:#2a2a2a;">Afp por pagar</div>
<div class="c" style="right:896.50px;top:599.25px;font-size:11.5px;font-weight:normal;color:#2a2a2a;;text-align:right">-</div>
<div class="c" style="right:796.00px;top:599.25px;font-size:11.5px;font-weight:normal;color:#2a2a2a;;text-align:right">439.177</div>
<div class="c" style="right:689.50px;top:599.25px;font-size:11.5px;font-weight:normal;color:#2a2a2a;;text-align:right">31/03/2016</div>
<div class="c" style="left:595.50px;top:599.25px;font-size:11.5px;font-weight:normal;color:#2a2a2a;">AFP $</div>
<div class="c" style="right:1070.00px;top:618.00px;font-size:11.5px;font-weight:normal;color:#2a2a2a;;text-align:right">140113</div>
<div class="c" style="left:215.00px;top:618.00px;font-size:11.5px;font-weight:normal;color:#2a2a2a;">Isapres y INP por pagar</div>
<div class="c" style="right:796.00px;top:618.00px;font-size:11.5px;font-weight:normal;color:#2a2a2a;;text-align:right">270.603</div>
<div class="c" style="right:689.50px;top:618.00px;font-size:11.5px;font-weight:normal;color:#2a2a2a;;text-align:right">31/03/2016</div>
<div class="c" style="left:595.50px;top:618.00px;font-size:11.5px;font-weight:normal;color:#2a2a2a;">Isapre</div>
<div class="c" style="left:784px;top:580.50px;width:69px;overflow:hidden;font-size:11.5px;color:#2a2a2a">Leyes Sociales</div>
<div class="c" style="right:367.50px;top:580.50px;font-size:11.5px;font-weight:normal;color:#2a2a2a;;text-align:right">0,950%</div>
<div class="c" style="right:304.50px;top:580.50px;font-size:11.5px;font-weight:normal;color:#2a2a2a;;text-align:right">31.363</div>
<div class="c" style="left:784.00px;top:599.25px;font-size:11.5px;font-weight:normal;color:#2a2a2a;">AFC</div>
<div class="c" style="right:367.50px;top:599.25px;font-size:11.5px;font-weight:normal;color:#2a2a2a;;text-align:right">3%</div>
<div class="c" style="right:304.50px;top:599.25px;font-size:11.5px;font-weight:normal;color:#2a2a2a;;text-align:right">51.832</div>
<div class="c" style="left:784.00px;top:618.00px;font-size:11.5px;font-weight:normal;color:#2a2a2a;">AFC</div>
<div class="c" style="right:367.50px;top:618.00px;font-size:11.5px;font-weight:normal;color:#2a2a2a;;text-align:right">2,40%</div>
<div class="c" style="right:304.50px;top:618.00px;font-size:11.5px;font-weight:normal;color:#2a2a2a;;text-align:right">52.775</div>
<div class="r" style="left:780.5px;top:429.0px;width:71px;height:20.25px;border:2px solid #2b5e3f;border-right:none;background:#fff"></div>
<div class="r" style="left:782.5px;top:431.0px;width:21px;height:16.25px;background:#fff;"></div>
<div class="r" style="left:803px;top:430.5px;width:1.3px;height:17.75px;background:#222;"></div>
<div class="r" style="left:851px;top:447.25px;width:5px;height:4px;background:#2b5e3f;"></div>
<div class="c" style="left:784.00px;top:430.50px;font-size:11.5px;font-weight:normal;color:#2a2a2a;">=SI.</div>
<div class="r" style="left:1265.5px;top:127px;width:14.5px;height:509.25px;background:#e7e5e9;"></div>
<div class="r" style="left:1265px;top:148px;width:1.2px;height:488px;background:#b8b8b8;"></div>
<div class="r" style="left:1268.5px;top:131px;width:1px;height:369px;background:#cfcfcf;"></div>
<div class="r" style="left:1269.5px;top:131px;width:10.5px;height:14px;background:#fff;"></div>
<div class="r" style="left:1269.5px;top:145px;width:10.5px;height:1px;background:#c8c8c8;"></div>
<div class="r" style="left:1269.5px;top:146px;width:10.5px;height:354px;background:#fff;"></div>
<div class="r" style="left:1265.5px;top:500px;width:14.5px;height:123px;background:#d9d8dc;"></div>
<div class="r" style="left:1269.5px;top:623px;width:10.5px;height:12.5px;background:#fff;"></div>
<svg style="left:1271px;top:135px" width="9" height="5"><path d="M0 4.5l4.5-4.5 4.5 4.5z" fill="#666"/></svg>
<svg style="left:1271px;top:627px" width="9" height="5"><path d="M0 0l4.5 4.5 4.5-4.5z" fill="#666"/></svg>
<div class="r" style="left:131px;top:120px;width:47px;height:18px;background:#fff;border:1px solid #c8c8c8;box-shadow:1px 1px 2px rgba(0,0,0,.15)"></div>
<div class="t" style="left:134px;top:123px;font-size:10.5px;color:#555;font-weight:normal;">Cancelar</div>
<svg style="left:131px;top:89px" width="12" height="16" viewBox="0 0 12 16"><path d="M1 1v12l3-3 2.5 5 1.5-.8-2.4-4.7H10z" fill="#fff" stroke="#333" stroke-width="0.9"/></svg>
<div class="r" style="left:182.5px;top:449.75px;width:605px;height:17px;background:#fff;border:1px solid #c4c4c4;box-shadow:1px 1px 2px rgba(0,0,0,.12)"></div>
<div class="t" style="left:187px;top:453.25px;font-size:11px;color:#707070;font-weight:normal;letter-spacing:0.076px;">Comprueba si se cumplen una o más condiciones y devuelve un valor correspondiente a la primera condición verdadera</div>
<div class="r" style="left:791px;top:450px;width:161px;height:131px;background:#fff;border:1px solid #aaa;box-shadow:1px 1px 3px rgba(0,0,0,.2)"></div>
<div class="r" style="left:811px;top:451.5px;width:140px;height:16px;background:#3390ea;"></div>
<svg style="left:796px;top:453.5px" width="14" height="14" viewBox="0 0 14 14"><circle cx="7" cy="7" r="6" fill="#f6f6f6" stroke="#666" stroke-width="1.1"/><text x="3.2" y="10.5" font-size="10" font-style="italic" font-weight="bold" font-family="Liberation Serif" fill="#444">f</text><text x="7.3" y="10.5" font-size="6.5" font-style="italic" font-weight="bold" font-family="Liberation Serif" fill="#444">x</text></svg>
<div class="t" style="left:813px;top:455px;font-size:10.5px;color:#e8f4ff;font-weight:normal;letter-spacing:-0.634px;">SI.CONJUNTO</div>
<svg style="left:796px;top:469.5px" width="14" height="14" viewBox="0 0 14 14"><circle cx="7" cy="7" r="6" fill="#f6f6f6" stroke="#666" stroke-width="1.1"/><text x="3.2" y="10.5" font-size="10" font-style="italic" font-weight="bold" font-family="Liberation Serif" fill="#444">f</text><text x="7.3" y="10.5" font-size="6.5" font-style="italic" font-weight="bold" font-family="Liberation Serif" fill="#444">x</text></svg>
<div class="t" style="left:813px;top:471px;font-size:10.5px;color:#333;font-weight:normal;letter-spacing:-0.720px;">SI.ERROR</div>
<svg style="left:796px;top:485.5px" width="14" height="14" viewBox="0 0 14 14"><circle cx="7" cy="7" r="6" fill="#f6f6f6" stroke="#666" stroke-width="1.1"/><text x="3.2" y="10.5" font-size="10" font-style="italic" font-weight="bold" font-family="Liberation Serif" fill="#444">f</text><text x="7.3" y="10.5" font-size="6.5" font-style="italic" font-weight="bold" font-family="Liberation Serif" fill="#444">x</text></svg>
<div class="t" style="left:813px;top:487px;font-size:10.5px;color:#333;font-weight:normal;letter-spacing:-0.401px;">SI.ND</div>
<svg style="left:796px;top:501.5px" width="14" height="14" viewBox="0 0 14 14"><circle cx="7" cy="7" r="6" fill="#f6f6f6" stroke="#666" stroke-width="1.1"/><text x="3.2" y="10.5" font-size="10" font-style="italic" font-weight="bold" font-family="Liberation Serif" fill="#444">f</text><text x="7.3" y="10.5" font-size="6.5" font-style="italic" font-weight="bold" font-family="Liberation Serif" fill="#444">x</text></svg>
<div class="t" style="left:813px;top:503px;font-size:10.5px;color:#333;font-weight:normal;letter-spacing:-0.608px;">CONTAR.SI.CONJUNTO</div>
<svg style="left:796px;top:517.5px" width="14" height="14" viewBox="0 0 14 14"><circle cx="7" cy="7" r="6" fill="#f6f6f6" stroke="#666" stroke-width="1.1"/><text x="3.2" y="10.5" font-size="10" font-style="italic" font-weight="bold" font-family="Liberation Serif" fill="#444">f</text><text x="7.3" y="10.5" font-size="6.5" font-style="italic" font-weight="bold" font-family="Liberation Serif" fill="#444">x</text></svg>
<div class="t" style="left:813px;top:519px;font-size:10.5px;color:#333;font-weight:normal;letter-spacing:-0.510px;">MAX.SI.CONJUNTO</div>
<svg style="left:796px;top:533.5px" width="14" height="14" viewBox="0 0 14 14"><circle cx="7" cy="7" r="6" fill="#f6f6f6" stroke="#666" stroke-width="1.1"/><text x="3.2" y="10.5" font-size="10" font-style="italic" font-weight="bold" font-family="Liberation Serif" fill="#444">f</text><text x="7.3" y="10.5" font-size="6.5" font-style="italic" font-weight="bold" font-family="Liberation Serif" fill="#444">x</text></svg>
<div class="t" style="left:813px;top:535px;font-size:10.5px;color:#333;font-weight:normal;letter-spacing:-0.409px;">MIN.SI.CONJUNTO</div>
<svg style="left:796px;top:549.5px" width="14" height="14" viewBox="0 0 14 14"><circle cx="7" cy="7" r="6" fill="#f6f6f6" stroke="#666" stroke-width="1.1"/><text x="3.2" y="10.5" font-size="10" font-style="italic" font-weight="bold" font-family="Liberation Serif" fill="#444">f</text><text x="7.3" y="10.5" font-size="6.5" font-style="italic" font-weight="bold" font-family="Liberation Serif" fill="#444">x</text></svg>
<div class="t" style="left:813px;top:551px;font-size:10.5px;color:#333;font-weight:normal;letter-spacing:-0.478px;">PROMEDIO.SI.CONJUNTO</div>
<svg style="left:796px;top:565.5px" width="14" height="14" viewBox="0 0 14 14"><circle cx="7" cy="7" r="6" fill="#f6f6f6" stroke="#666" stroke-width="1.1"/><text x="3.2" y="10.5" font-size="10" font-style="italic" font-weight="bold" font-family="Liberation Serif" fill="#444">f</text><text x="7.3" y="10.5" font-size="6.5" font-style="italic" font-weight="bold" font-family="Liberation Serif" fill="#444">x</text></svg>
<div class="t" style="left:813px;top:567px;font-size:10.5px;color:#333;font-weight:normal;letter-spacing:-0.548px;">SUMAR.SI.CONJUNTO</div>
<div class="r" style="left:0px;top:636.25px;width:1280px;height:26.5px;background:#e7e5e9;"></div>
<div class="r" style="left:0px;top:636.25px;width:1266px;height:1px;background:#cfcfcf;"></div>
<svg style="left:24px;top:644.5px" width="40" height="10"><path d="M5.5 1v7L2 4.5z" fill="#555"/><path d="M31 1v7l3.5-3.5z" fill="#555"/></svg>
<div class="t" style="left:75px;top:643px;font-size:12px;color:#555;font-weight:bold;">...</div>
<div class="r" style="left:94.5px;top:641px;width:1px;height:17px;background:#c4c4c4;"></div>
<div class="r" style="left:157.5px;top:641px;width:1px;height:17px;background:#c4c4c4;"></div>
<div class="r" style="left:272px;top:641px;width:1px;height:17px;background:#c4c4c4;"></div>
<div class="r" style="left:554.5px;top:641px;width:1px;height:17px;background:#c4c4c4;"></div>
<div class="r" style="left:623px;top:641px;width:1px;height:17px;background:#c4c4c4;"></div>
<div class="r" style="left:691px;top:641px;width:1px;height:17px;background:#c4c4c4;"></div>
<div class="r" style="left:366.75px;top:636.25px;width:68px;height:22.5px;background:#ffffff;"></div>
<div class="r" style="left:366.75px;top:636.25px;width:1px;height:22.5px;background:#c8c8c8;"></div>
<div class="r" style="left:434.5px;top:636.25px;width:1px;height:22.5px;background:#c8c8c8;"></div>
<div class="r" style="left:366.75px;top:657px;width:68px;height:2px;background:#3d7a58;"></div>
<div class="r" style="left:436px;top:638.75px;width:116.5px;height:20px;background:#a6c8ec;"></div>
<div class="t" style="left:106px;top:643px;font-size:11.8px;color:#666;font-weight:normal;">Indices</div>
<div class="t" style="left:171px;top:643px;font-size:11.8px;color:#666;font-weight:normal;">Plan de Cuentas</div>
<div class="t" style="left:285px;top:643px;font-size:11.8px;color:#666;font-weight:normal;">2016  Taller</div>
<div class="t" style="left:377.5px;top:643px;font-size:11.8px;color:#3d7a58;font-weight:bold;letter-spacing:0.2px;">Sueldos</div>
<div class="t" style="left:447px;top:643px;font-size:11.8px;color:#2a3a4a;font-weight:normal;letter-spacing:0.2px;">2016 Libro diario</div>
<div class="t" style="left:567px;top:643px;font-size:11.8px;color:#666;font-weight:normal;">Activos</div>
<div class="t" style="left:636px;top:643px;font-size:11.8px;color:#666;font-weight:normal;">Pasivos</div>
<div class="r" style="left:691.75px;top:638.75px;width:14px;height:20px;background:#d81818;"></div>
<div class="t" style="left:713px;top:643px;font-size:12px;color:#555;font-weight:bold;">...</div>
<svg style="left:736px;top:640.5px" width="17" height="17"><circle cx="8.5" cy="8.5" r="7" fill="none" stroke="#777" stroke-width="1.2"/><path d="M8.5 4.5v8M4.5 8.5h8" stroke="#777" stroke-width="1.2"/></svg>
<div class="r" style="left:771.5px;top:644px;width:1.5px;height:1.5px;background:#b0b0b0;"></div>
<div class="r" style="left:771.5px;top:648px;width:1.5px;height:1.5px;background:#b0b0b0;"></div>
<div class="r" style="left:771.5px;top:652px;width:1.5px;height:1.5px;background:#b0b0b0;"></div>
<div class="r" style="left:787.5px;top:642.5px;width:465px;height:13px;background:#d9d8dc;"></div>
<div class="r" style="left:787.5px;top:642.5px;width:14px;height:13px;background:#ffffff;"></div>
<div class="r" style="left:801.5px;top:642.5px;width:1px;height:13px;background:#c6c6c6;"></div>
<svg style="left:791px;top:645.5px" width="6" height="8"><path d="M5 0v7L1 3.5z" fill="#555"/></svg>
<div class="r" style="left:802.5px;top:642.5px;width:223px;height:13px;background:#ffffff;"></div>
<div class="r" style="left:1252px;top:642.5px;width:13.5px;height:13px;background:#ffffff;"></div>
<div class="r" style="left:1251.5px;top:642.5px;width:1px;height:13px;background:#c6c6c6;"></div>
<svg style="left:1257px;top:645.5px" width="6" height="8"><path d="M1 0v7l4-3.5z" fill="#555"/></svg>
<div class="r" style="left:1266px;top:636.25px;width:14px;height:26.5px;background:#e7e5e9;"></div>
<div class="r" style="left:0px;top:662.75px;width:1280px;height:20px;background:#f0eff2;"></div>
<div class="r" style="left:0px;top:662.75px;width:1280px;height:1px;background:#dedde0;"></div>
<div class="t" style="left:7px;top:667px;font-size:11px;color:#666;font-weight:normal;letter-spacing:0.265px;">Introducir</div>
<svg style="left:73px;top:665px" width="14" height="14" viewBox="0 0 14 14"><circle cx="3" cy="3" r="2" fill="#888"/><rect x="6" y="1.5" width="7" height="3" fill="#888"/><g stroke="#999" stroke-width="1"><path d="M1 6.5h12M1 9h12M1 11.5h12M1 13.5h12M4.5 6v8M8 6v8M11.5 6v8"/></g></svg>
<svg style="left:1018px;top:665px" width="90" height="14"><g fill="none" stroke="#777" stroke-width="1"><rect x="1.5" y="1.5" width="12" height="11"/><path d="M1.5 5.2h12M1.5 8.8h12M5.5 1.5v11M9.5 1.5v11"/>
<rect x="37.5" y="1.5" width="12" height="11"/><rect x="40.5" y="3.5" width="6" height="7"/>
<path d="M73 12.5V1.5h12v11zM76.5 1.5v5h5v-5"/></g></svg>
<svg style="left:1120px;top:665px" width="120" height="14"><path d="M2 7h7" stroke="#aaa" stroke-width="1.3"/><path d="M10 7h94" stroke="#bbb" stroke-width="1"/><path d="M57 3.5v7" stroke="#999" stroke-width="1.2"/><path d="M107 7h8M111 3v8" stroke="#999" stroke-width="1.3"/></svg>
<div class="t" style="left:1251px;top:667px;font-size:11px;color:#c4c4c4;font-weight:normal;">100 %</div>
<div class="r" style="left:0px;top:682.75px;width:1280px;height:37.25px;background:#022552;"></div>
<div class="r" style="left:0px;top:682.75px;width:45px;height:37.25px;background:#012a5c;"></div>
<svg style="left:15px;top:692.5px" width="15" height="15" viewBox="0 0 17 16"><path d="M0 2.3l7-1v6.2H0zM8 1.1l9-1.1v7.5H8zM0 8.5h7v6.2l-7-1zM8 8.5h9V16l-9-1.1z" fill="#fff"/></svg>
<div class="r" style="left:45px;top:682.75px;width:326px;height:37.25px;background:#305374;"></div>
<div class="t" style="left:53px;top:695px;font-size:13px;color:#9fb4cc;font-weight:normal;letter-spacing:0.397px;">Búsqueda en Windows</div>
<svg style="left:381px;top:694px" width="22" height="14" viewBox="0 0 22 14"><rect x="5" y="1" width="12" height="12" fill="none" stroke="#e8e8e8" stroke-width="1.3"/><path d="M2 3v8M20 3v8" stroke="#e8e8e8" stroke-width="1.3"/></svg>
<div class="t" style="left:430px;top:689px;font-size:25px;color:#1f8ee8;font-weight:bold">e</div>
<svg style="left:475px;top:690px" width="21" height="22" viewBox="0 0 21 22"><path d="M6.5 6V4.5a4 4 0 0 1 8 0V6" fill="none" stroke="#fff" stroke-width="1.6"/><path d="M1 6h19v14.5L1 21z" fill="#fff"/><rect x="6" y="9.5" width="4" height="4" fill="#022552"/><rect x="11" y="9.5" width="4" height="4" fill="#022552"/><rect x="6" y="14.5" width="4" height="4" fill="#022552"/><rect x="11" y="14.5" width="4" height="4" fill="#022552"/></svg>
<div class="r" style="left:529px;top:693px;width:13px;height:17px;background:#f3f3f3"></div><div class="r" style="left:520px;top:691px;width:14px;height:20px;background:#d24726"></div><div class="t" style="left:522px;top:695px;font-size:12px;color:#fff;font-weight:bold">P</div>
<div class="r" style="left:577px;top:694px;width:11px;height:13px;background:#e4eef8"></div><div class="r" style="left:567.5px;top:691px;width:13px;height:20px;background:#0a72c6"></div><div class="t" style="left:569px;top:695px;font-size:12px;color:#fff;font-weight:bold">o</div>
<div class="r" style="left:601px;top:682.75px;width:45px;height:37.25px;background:#173b66;"></div>
<div class="r" style="left:624px;top:693px;width:11px;height:17px;background:#d8eadf"></div><div class="r" style="left:614px;top:691px;width:13px;height:20px;background:#1e7145"></div><div class="t" style="left:615.5px;top:695px;font-size:12px;color:#fff;font-weight:bold">X</div>
<div class="r" style="left:601px;top:717.5px;width:45px;height:2.5px;background:#8fb3d9;"></div>
<div class="r" style="left:670px;top:693px;width:11px;height:17px;background:#e0e8f4"></div><div class="r" style="left:660px;top:691px;width:13px;height:20px;background:#2b579a"></div><div class="t" style="left:660.5px;top:695px;font-size:11px;color:#fff;font-weight:bold">W</div>
<div class="r" style="left:706px;top:691px;width:21px;height:21px;border-radius:50%;background:conic-gradient(from -60deg,#e33b2e 0 120deg,#f6c026 120deg 240deg,#2f9e48 240deg 360deg)"></div><div class="r" style="left:711.5px;top:696.5px;width:10px;height:10px;border-radius:50%;background:#4a8af4;border:1.8px solid #fff"></div>
<div class="r" style="left:697.5px;top:717.5px;width:38px;height:2.5px;background:#8fb3d9;"></div>
<div class="r" style="left:752px;top:690px;width:17px;height:15px;border-radius:50%;background:#d9d2dc"></div><div class="r" style="left:756px;top:694px;width:10px;height:7px;background:#b83a48;border-radius:3px"></div><div class="r" style="left:762px;top:702px;width:10px;height:9px;border-radius:50%;border:1.5px solid #7aa8d8"></div>
<svg style="left:799px;top:690px" width="21" height="22" viewBox="0 0 21 22"><path d="M3 11L12 2l7 4-9 9z" fill="#f0b040"/><path d="M2 16l8-8 7 5-8 8z" fill="#e09020"/><path d="M6 13l8-6" stroke="#333" stroke-width="1.2"/></svg>
<div class="t" style="left:843px;top:686px;font-size:27px;color:#3fa8ee;font-weight:bold">e</div><svg style="left:843px;top:689px" width="24" height="22"><path d="M3 18C-1 12 8 2 20 3" fill="none" stroke="#e8b830" stroke-width="2"/></svg>
<div class="r" style="left:890px;top:693px;width:22px;height:17px;background:#f2cf6b;border-radius:1px"></div><div class="r" style="left:890px;top:690px;width:9px;height:4px;background:#e8b848"></div><div class="r" style="left:897px;top:702px;width:8px;height:6px;background:#3b8fd6"></div>
<div class="r" style="left:936px;top:691px;width:21px;height:21px;border-radius:50%;background:radial-gradient(circle at 45% 35%,#ff7070,#c81818 60%,#901010);border:1px solid #e8c0c0"></div>
<div class="r" style="left:928px;top:717.5px;width:37px;height:2.5px;background:#8fb3d9;"></div>
<div class="r" style="left:1063px;top:691px;width:22px;height:22px;border-radius:50%;background:#2a8ee0;border:2px solid #f0f8ff"></div><div class="t" style="left:1068.5px;top:694.5px;font-size:15px;color:#fff;font-weight:bold">?</div>
<svg style="left:1096px;top:697px" width="12" height="8"><path d="M1 7l5-5 5 5" fill="none" stroke="#fff" stroke-width="1.4"/></svg>
<svg style="left:1117px;top:694px" width="16" height="15"><path d="M1 5h3l4-4v13l-4-4H1z" fill="none" stroke="#fff" stroke-width="1.1"/><path d="M10.5 5a3 3 0 0 1 0 5M12.5 3a6 6 0 0 1 0 9" fill="none" stroke="#aab" stroke-width="1"/></svg>
<div class="t" style="left:1143px;top:688px;font-size:11.5px;color:#fff;font-weight:normal;">ESP</div>
<div class="t" style="left:1147px;top:704px;font-size:11.5px;color:#fff;font-weight:normal;">ES</div>
<div class="t" style="left:1189px;top:688px;font-size:11.5px;color:#fff;font-weight:normal;">21:36</div>
<div class="t" style="left:1175px;top:704px;font-size:11.5px;color:#fff;font-weight:normal;letter-spacing:-0.3px;">23/10/2016</div>
<svg style="left:1246px;top:693px" width="18" height="18" viewBox="0 0 18 18"><path d="M1.5 1.5h14v11h-7l-4 4v-4h-3z" fill="#fff"/><path d="M4 5h9M4 8h9" stroke="#022552" stroke-width="1.2"/><circle cx="14" cy="14" r="3" fill="#022552"/><circle cx="14" cy="14" r="2" fill="none" stroke="#fff" stroke-width="1"/></svg>
</body></html>
